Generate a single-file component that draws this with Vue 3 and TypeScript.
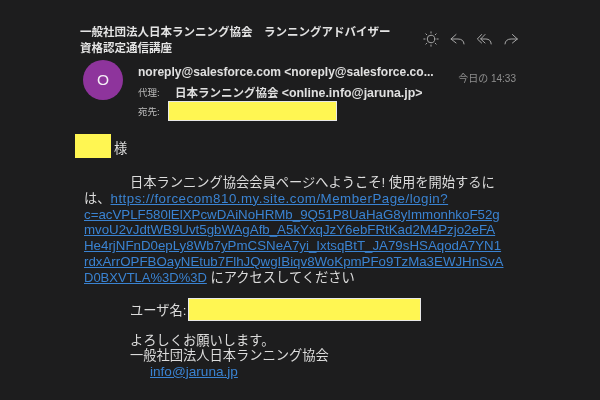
<script setup lang="ts">
const linkLines: string[] = [
  'c=acVPLF580lElXPcwDAiNoHRMb_9Q51P8UaHaG8yImmonhkoF52g',
  'mvoU2vJdtWB9Uvt5gbWAgAfb_A5kYxqJzY6ebFRtKad2M4Pzjo2eFA',
  'He4rjNFnD0epLy8Wb7yPmCSNeA7yi_IxtsqBtT_JA79sHSAqodA7YN1',
  'rdxArrOPFBOayNEtub7FlhJQwgIBiqv8WoKpmPFo9TzMa3EWJHnSvA',
]
</script>

<template>
  <main class="page">
    <header class="head">
      <div class="topline">
        <h1 class="subject">一般社団法人日本ランニング協会　ランニングアドバイザー<br />資格認定通信講座</h1>
        <div class="tools">
          <svg viewBox="0 0 20 20" class="icon"><circle cx="10" cy="10" r="4.200" /><path d="M10 2v1.400M10 16.600V18M2 10h1.400M16.600 10H18M4.300 4.300l1 1M14.700 14.700l1 1M4.300 15.700l1-1M14.700 5.300l1-1" /></svg>
          <svg viewBox="0 0 20 20" class="icon"><path d="M7.800 5 2.200 10l5.600 4.400M2.400 10H10c4 0 6.500 2 6.700 5.500" /></svg>
          <svg viewBox="0 0 20 20" class="icon"><path d="M6.200 5 1.500 10l4.700 4.400M10 5 5.200 10l4.800 4.400M5.400 10H11c3.500 0 5.700 2 5.900 5.500" /></svg>
          <svg viewBox="0 0 20 20" class="icon"><path d="M10.500 5l5.500 5-5.500 4.400M15.800 10H9c-4 0-6.600 2-6.800 5.500" /></svg>
        </div>
      </div>
      <div class="meta">
        <div class="avatar">O</div>
        <div class="who">
          <div class="sender">noreply@salesforce.com &lt;noreply@salesforce.co...</div>
          <div class="proxy"><span class="label">代理:</span><span class="proxy-name">日本ランニング協会 <span class="proxy-mail">&lt;online.info@jaruna.jp&gt;</span></span></div>
          <div class="to"><span class="label">宛先:</span><span class="mask mask-to"></span></div>
        </div>
        <time class="date">今日の 14:33</time>
      </div>
    </header>

    <section class="body">
      <div class="greet"><span class="mask mask-name"></span><span class="honor">様</span></div>
      <p class="para">
        <span class="indent">日本ランニング協会会員ページへようこそ! 使用を開始するに</span><br />
        は、<a class="link link-first">https://forcecom810.my.site.com/MemberPage/login?</a><br />
        <template v-for="line in linkLines" :key="line"><a class="link">{{ line }}</a><br /></template>
        <a class="link link-last">D0BXVTLA%3D%3D</a> にアクセスしてください
      </p>
      <div class="user"><span>ユーザ名:</span><span class="mask mask-user"></span></div>
      <p class="sign">
        よろしくお願いします。<br />
        一般社団法人日本ランニング協会<br />
        <a class="link mail">info@jaruna.jp</a>
      </p>
    </section>
  </main>
</template>

<style scoped>
.page {
  width: 600px;
  height: 400px;
  box-sizing: border-box;
  overflow: hidden;
  background: #1d1d1e;
  color: #dcdcdc;
  padding: 24px 0 0 0;
  font-family: "Liberation Sans", "Noto Sans CJK JP", sans-serif;
  filter: blur(0.35px);
}
.head {
  padding-left: 80px;
  padding-right: 79px;
}
.topline {
  display: flex;
  justify-content: space-between;
  align-items: center;
}
.subject {
  margin: 0;
  font-size: 11.5px;
  line-height: 16px;
  font-weight: 700;
  color: #e4e4e4;
  white-space: nowrap;
}
.tools {
  display: flex;
  gap: 9px;
  margin-bottom: 2px;
}
.icon {
  width: 18px;
  height: 18px;
  fill: none;
  stroke: #a8a8a8;
  stroke-width: 1.1;
  stroke-linecap: round;
  stroke-linejoin: round;
}
.meta {
  display: flex;
  align-items: flex-start;
  margin-top: 4px;
}
.avatar {
  width: 40px;
  height: 40px;
  margin-left: 3px;
  flex: none;
  border-radius: 50%;
  background: #8e349c;
  color: #f4eef5;
  font-size: 15.500px;
  line-height: 40px;
  text-align: center;
}
.who {
  margin-left: 15px;
  padding-top: 4px;
  width: 300px;
}
.sender {
  font-size: 12.05px;
  font-weight: 700;
  line-height: 16px;
  color: #e0e0e0;
  white-space: nowrap;
}
.proxy {
  display: flex;
  align-items: center;
  height: 18px;
  margin-top: 3px;
}
.to {
  display: flex;
  align-items: center;
  height: 20px;
}
.label {
  width: 30px;
  flex: none;
  font-size: 9.5px;
  color: #bdbdbd;
}
.proxy-name {
  margin-left: 7px;
  font-size: 11.5px;
  font-weight: 700;
  color: #e0e0e0;
  white-space: nowrap;
}
.proxy-mail {
  font-size: 12.400px;
}
.mask {
  display: block;
  background: #fff652;
  border: 1px solid #e8e8e8;
  box-sizing: border-box;
}
.mask-to {
  width: 169px;
  height: 20px;
}
.date {
  margin-left: auto;
  margin-top: 10px;
  margin-right: 5px;
  font-size: 10px;
  color: #8f8f8f;
  white-space: nowrap;
}
.body {
  padding-left: 84px;
  margin-top: 13px;
}
.greet {
  display: flex;
  align-items: flex-end;
  gap: 3px;
  margin-left: -9px;
  font-size: 13.250px;
  line-height: 16px;
}
.honor {
  margin-bottom: 1px;
}
.mask-name {
  width: 36px;
  height: 24px;
  border: 0;
  background: #fff652;
}
.para {
  margin: 17px 0 0;
  font-size: 13.250px;
  line-height: 15.800px;
  white-space: nowrap;
}
.indent {
  margin-left: 46px;
}
.link {
  color: #3a83d2;
  text-decoration: underline;
  font-size: 13.300px;
}
.link-first {
  letter-spacing: 0.5px;
}
.link-last {
  font-size: 13px;
}
.user {
  display: flex;
  align-items: center;
  gap: 2px;
  margin: 12px 0 0 46px;
  font-size: 13.250px;
}
.mask-user {
  width: 233px;
  height: 23px;
}
.sign {
  margin: 12px 0 0 46px;
  font-size: 13.250px;
  line-height: 15.500px;
  white-space: nowrap;
}
.mail {
  margin-left: 20px;
  font-size: 13.600px;
}
</style>
